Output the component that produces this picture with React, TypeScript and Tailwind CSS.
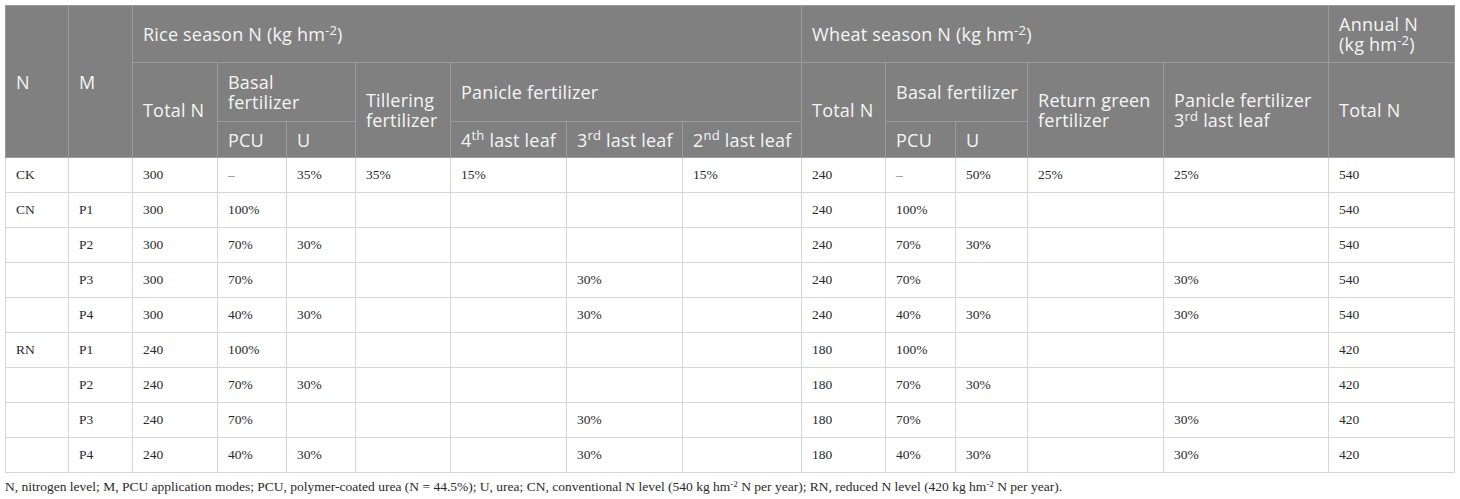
import React from "react";

const COL_WIDTHS = [63, 64, 85, 69, 69, 95, 116, 116, 119, 84, 70, 72, 136, 165, 126];

const ROWS: string[][] = [
  ["CK", "", "300", "–", "35%", "35%", "15%", "", "15%", "240", "–", "50%", "25%", "25%", "540"],
  ["CN", "P1", "300", "100%", "", "", "", "", "", "240", "100%", "", "", "", "540"],
  ["", "P2", "300", "70%", "30%", "", "", "", "", "240", "70%", "30%", "", "", "540"],
  ["", "P3", "300", "70%", "", "", "", "30%", "", "240", "70%", "", "", "30%", "540"],
  ["", "P4", "300", "40%", "30%", "", "", "30%", "", "240", "40%", "30%", "", "30%", "540"],
  ["RN", "P1", "240", "100%", "", "", "", "", "", "180", "100%", "", "", "", "420"],
  ["", "P2", "240", "70%", "30%", "", "", "", "", "180", "70%", "30%", "", "", "420"],
  ["", "P3", "240", "70%", "", "", "", "30%", "", "180", "70%", "", "", "30%", "420"],
  ["", "P4", "240", "40%", "30%", "", "", "30%", "", "180", "40%", "30%", "", "30%", "420"],
];

const th = "border border-[#9b9b9b] px-[10px] text-left align-middle font-normal";
const thOne = "border border-[#9b9b9b] px-[10px] text-left align-middle font-normal whitespace-nowrap";

function Unit() {
  return (
    <>
      (kg hm<sup className="text-[13px]">-2</sup>)
    </>
  );
}

export default function App() {
  return (
    <div className="p-[5px] bg-white">
      <table className="table-fixed border-collapse w-[1449px]">
        <colgroup>
          {COL_WIDTHS.map((w, i) => (
            <col key={i} style={{ width: w }} />
          ))}
        </colgroup>
        <thead className="bg-[#808080] text-[#f5f5f5] text-[18px] leading-5 tracking-[0.2px] font-['Open_Sans',sans-serif]">
          <tr className="h-[57px]">
            <th rowSpan={3} className={th}>N</th>
            <th rowSpan={3} className={th}>M</th>
            <th colSpan={7} className={thOne}>
              Rice season N <Unit />
            </th>
            <th colSpan={5} className={thOne}>
              Wheat season N <Unit />
            </th>
            <th className={th}>
              Annual N<br />
              <Unit />
            </th>
          </tr>
          <tr className="h-[59px]">
            <th rowSpan={2} className={thOne}>Total N</th>
            <th colSpan={2} className={th}>Basal fertilizer</th>
            <th rowSpan={2} className={th}>Tillering fertilizer</th>
            <th colSpan={3} className={thOne}>Panicle fertilizer</th>
            <th rowSpan={2} className={thOne}>Total N</th>
            <th colSpan={2} className={thOne}>Basal fertilizer</th>
            <th rowSpan={2} className={th}>
              Return green<br />
              fertilizer
            </th>
            <th rowSpan={2} className={thOne}>
              Panicle fertilizer<br />
              3<sup className="text-[13px]">rd</sup> last leaf
            </th>
            <th rowSpan={2} className={thOne}>Total N</th>
          </tr>
          <tr className="h-[36px]">
            <th className={thOne}>PCU</th>
            <th className={thOne}>U</th>
            <th className={thOne}>
              4<sup className="text-[13px]">th</sup> last leaf
            </th>
            <th className={thOne}>
              3<sup className="text-[13px]">rd</sup> last leaf
            </th>
            <th className={thOne}>
              2<sup className="text-[13px]">nd</sup> last leaf
            </th>
            <th className={thOne}>PCU</th>
            <th className={thOne}>U</th>
          </tr>
        </thead>
        <tbody className="text-[13.5px] text-[#2a2a2a] font-['Liberation_Serif',serif]">
          {ROWS.map((row, r) => (
            <tr key={r} className="h-[35px]">
              {row.map((cell, c) => (
                <td
                  key={c}
                  className={`border border-[#d6d6d6] px-[10px] align-middle ${cell === "–" ? "text-[#777]" : ""}`}
                >
                  {cell}
                </td>
              ))}
            </tr>
          ))}
        </tbody>
      </table>
      <p className="mt-[4px] text-[13.5px] leading-5 text-[#2a2a2a] font-['Liberation_Serif',serif]">
        N, nitrogen level; M, PCU application modes; PCU, polymer-coated urea (N = 44.5%); U, urea; CN, conventional N
        level (540 kg hm<sup className="text-[9px]">-2</sup> N per year); RN, reduced N level (420 kg hm
        <sup className="text-[9px]">-2</sup> N per year).
      </p>
    </div>
  );
}
